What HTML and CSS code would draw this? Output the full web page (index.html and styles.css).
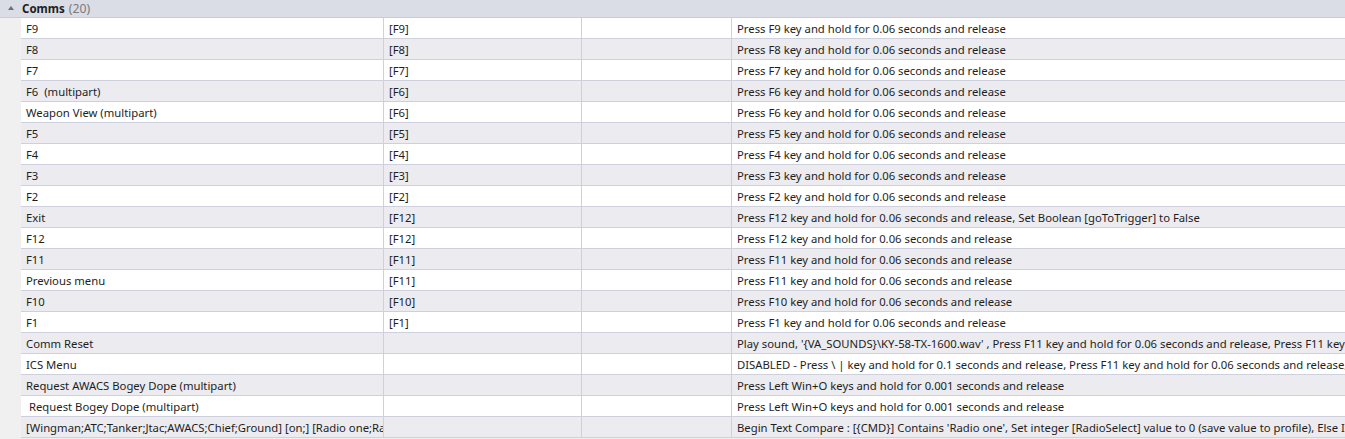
FILE: index.html
```html
<!DOCTYPE html>
<html>
<head>
<meta charset="utf-8">
<link rel="stylesheet" href="styles.css">
</head>
<body>
<div class="panel">
  <div class="group-header">
    <span class="caret"></span>
    <span class="group-title">Comms</span>
    <span class="group-count">(20)</span>
  </div>
  <div class="body">
    <div class="gutter"></div>
    <div class="grid">
      <div class="row"><div class="c c1">F9</div><div class="c c2">[F9]</div><div class="c c3"></div><div class="c c4">Press F9 key and hold for 0.06 seconds and release</div></div>
      <div class="row"><div class="c c1">F8</div><div class="c c2">[F8]</div><div class="c c3"></div><div class="c c4">Press F8 key and hold for 0.06 seconds and release</div></div>
      <div class="row"><div class="c c1">F7</div><div class="c c2">[F7]</div><div class="c c3"></div><div class="c c4">Press F7 key and hold for 0.06 seconds and release</div></div>
      <div class="row"><div class="c c1">F6  (multipart)</div><div class="c c2">[F6]</div><div class="c c3"></div><div class="c c4">Press F6 key and hold for 0.06 seconds and release</div></div>
      <div class="row"><div class="c c1">Weapon View (multipart)</div><div class="c c2">[F6]</div><div class="c c3"></div><div class="c c4">Press F6 key and hold for 0.06 seconds and release</div></div>
      <div class="row"><div class="c c1">F5</div><div class="c c2">[F5]</div><div class="c c3"></div><div class="c c4">Press F5 key and hold for 0.06 seconds and release</div></div>
      <div class="row"><div class="c c1">F4</div><div class="c c2">[F4]</div><div class="c c3"></div><div class="c c4">Press F4 key and hold for 0.06 seconds and release</div></div>
      <div class="row"><div class="c c1">F3</div><div class="c c2">[F3]</div><div class="c c3"></div><div class="c c4">Press F3 key and hold for 0.06 seconds and release</div></div>
      <div class="row"><div class="c c1">F2</div><div class="c c2">[F2]</div><div class="c c3"></div><div class="c c4">Press F2 key and hold for 0.06 seconds and release</div></div>
      <div class="row"><div class="c c1">Exit</div><div class="c c2">[F12]</div><div class="c c3"></div><div class="c c4">Press F12 key and hold for 0.06 seconds and release, Set Boolean [goToTrigger] to False</div></div>
      <div class="row"><div class="c c1">F12</div><div class="c c2">[F12]</div><div class="c c3"></div><div class="c c4">Press F12 key and hold for 0.06 seconds and release</div></div>
      <div class="row"><div class="c c1">F11</div><div class="c c2">[F11]</div><div class="c c3"></div><div class="c c4">Press F11 key and hold for 0.06 seconds and release</div></div>
      <div class="row"><div class="c c1">Previous menu</div><div class="c c2">[F11]</div><div class="c c3"></div><div class="c c4">Press F11 key and hold for 0.06 seconds and release</div></div>
      <div class="row"><div class="c c1">F10</div><div class="c c2">[F10]</div><div class="c c3"></div><div class="c c4">Press F10 key and hold for 0.06 seconds and release</div></div>
      <div class="row"><div class="c c1">F1</div><div class="c c2">[F1]</div><div class="c c3"></div><div class="c c4">Press F1 key and hold for 0.06 seconds and release</div></div>
      <div class="row"><div class="c c1">Comm Reset</div><div class="c c2"></div><div class="c c3"></div><div class="c c4">Play sound, '{VA_SOUNDS}\KY-58-TX-1600.wav' , Press F11 key and hold for 0.06 seconds and release, Press F11 key and hold for 0.06 seconds and release</div></div>
      <div class="row"><div class="c c1">ICS Menu</div><div class="c c2"></div><div class="c c3"></div><div class="c c4">DISABLED - Press \ | key and hold for 0.1 seconds and release, Press F11 key and hold for 0.06 seconds and release, Press F11 key and hold</div></div>
      <div class="row"><div class="c c1">Request AWACS Bogey Dope (multipart)</div><div class="c c2"></div><div class="c c3"></div><div class="c c4">Press Left Win+O keys and hold for 0.001 seconds and release</div></div>
      <div class="row"><div class="c c1"> Request Bogey Dope (multipart)</div><div class="c c2"></div><div class="c c3"></div><div class="c c4">Press Left Win+O keys and hold for 0.001 seconds and release</div></div>
      <div class="row"><div class="c c1">[Wingman;ATC;Tanker;Jtac;AWACS;Chief;Ground] [on;] [Radio one;Radio two;Radio three]</div><div class="c c2"></div><div class="c c3"></div><div class="c c4">Begin Text Compare : [{CMD}] Contains 'Radio one', Set integer [RadioSelect] value to 0 (save value to profile), Else If Text Compare</div></div>
    </div>
  </div>
</div>
</body>
</html>
```

FILE: styles.css
```css
html, body {
  margin: 0;
  padding: 0;
  background: #f0f0f0;
  overflow: hidden;
  width: 1345px;
  height: 439px;
}

.panel {
  font-family: "Noto Sans", "Open Sans", sans-serif;
  font-size: 11.3px;
  color: #1e1e1e;
}

.group-header {
  height: 17px;
  border-bottom: 1px solid #c9cbd6;
  background: #dadde6;
  display: flex;
  align-items: center;
  padding-left: 8px;
}

.caret {
  width: 0;
  height: 0;
  border-left: 3px solid transparent;
  border-right: 3px solid transparent;
  border-bottom: 4px solid #6e6e78;
  margin-right: 8px;
  margin-top: -1px;
}

.group-title {
  font-weight: bold;
  font-size: 11.5px;
  color: #1e1e1e;
}

.group-count {
  color: #7a7a7a;
  font-size: 12.2px;
  margin-left: 4px;
}

.body {
  display: flex;
}

.gutter {
  width: 21px;
  flex: none;
  background: #f0f0f0;
}

.grid {
  flex: 1;
  min-width: 0;
  overflow: hidden;
}

.row {
  display: grid;
  grid-template-columns: 363px 198px 150px 1fr;
  height: 20px;
  border-bottom: 1px solid #cfd0de;
  background: #ffffff;
}

.row:nth-child(even) {
  background: #ebebf0;
}

.c {
  box-sizing: border-box;
  height: 20px;
  white-space: pre;
  overflow: hidden;
  line-height: 20px;
  padding-top: 1px;
  padding-left: 5px;
  border-right: 1px solid #cfd0de;
}

.c4 {
  border-right: none;
}
```
